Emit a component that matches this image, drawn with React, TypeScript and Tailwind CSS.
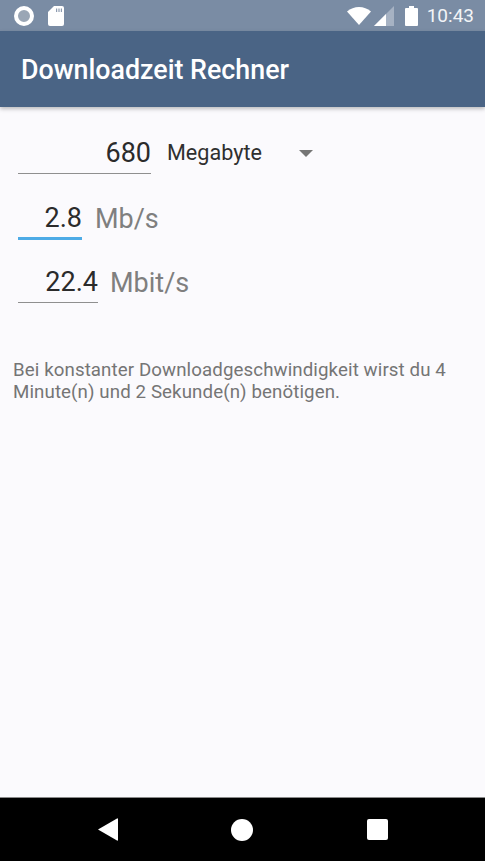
const ROBOTO = "font-['Roboto',sans-serif]";

const StatusBar = () => (
  <div className="h-[31px] shrink-0 bg-[#7a8ca4] flex items-center pl-[14px] pr-[11px] text-white">
    <div className="w-[20px] h-[20px] rounded-full border-[4px] border-white bg-[#9aa6b5]"></div>
    <svg className="ml-[14px]" width="16" height="20" viewBox="0 0 16 20">
      <path d="M6 0H14a2 2 0 0 1 2 2V18a2 2 0 0 1-2 2H2a2 2 0 0 1-2-2V6Z" fill="#fff" />
      <path d="M8 2.5h1.2v3.5H8zM10.4 2.5h1.2v3.5h-1.2zM12.8 2.5H14v3.5h-1.2z" fill="#8d9bb0" />
    </svg>
    <div className="flex-1"></div>
    <svg width="24" height="18" viewBox="0 0 24 18">
      <path d="M0 4.5C3.5 1.6 7.5 0 12 0s8.500 1.600 12 4.500L12 18Z" fill="#fff" />
    </svg>
    <svg className="ml-[3px]" width="20" height="20" viewBox="0 0 20 20">
      <path d="M0 20L20 0V20Z" fill="#a6b2c3" />
      <path d="M0 20L12 8V20Z" fill="#fff" />
    </svg>
    <svg className="ml-[11px]" width="13" height="20" viewBox="0 0 13 20">
      <path d="M4 0H9V2H12a1 1 0 0 1 1 1V19a1 1 0 0 1-1 1H1a1 1 0 0 1-1-1V3a1 1 0 0 1 1-1H4Z" fill="#fff" />
    </svg>
    <span className={`ml-[9px] text-[19px] leading-none text-[#f2f4f7] ${ROBOTO}`}>10:43</span>
  </div>
);

const Field = ({ value, unit, widthClass, lineClass, unitClass }: { value: string; unit: string; widthClass: string; lineClass: string; unitClass: string }) => (
  <div className="flex items-start">
    <div className={`${widthClass} ${lineClass} flex items-center justify-end pt-[2px] text-[27px] text-[#2b2b2b]`}>
      {value}
    </div>
    <span className={`${unitClass} h-[42px] flex items-center pt-[2px] text-[27px] text-[#7f7f7f]`}>{unit}</span>
  </div>
);

export default function App() {
  return (
    <div className={`h-[861px] w-[485px] flex flex-col overflow-hidden bg-[#fbfafd] ${ROBOTO}`}>
      <StatusBar />
      <header className="h-[76px] shrink-0 bg-[#4a6485] flex items-center pl-[21px] pt-[2px] shadow-[0_2px_4px_rgba(0,0,0,0.25)]">
        <h1 className="text-[26.8px] font-medium text-white">Downloadzeit Rechner</h1>
      </header>

      <main className="flex-1 pl-[18px] pt-[25px]">
        <div className="flex items-start">
          <div className="w-[133px] h-[42px] border-b border-b-[#8f8f8f] flex items-center justify-end pt-[2px] text-[27px] text-[#2b2b2b]">
            680
          </div>
          <div className="ml-[16px] h-[42px] w-[146px] pt-[1px] flex items-center justify-between">
            <span className="text-[21.6px] text-[#2f2f2f]">Megabyte</span>
            <svg width="14" height="7" viewBox="0 0 14 7">
              <path d="M0 0H14L7 7Z" fill="#757575" />
            </svg>
          </div>
        </div>
        <div className="mt-[23px]">
          <Field value="2.8" unit="Mb/s" widthClass="w-[64px] h-[43px]" lineClass="border-b-[3px] border-b-[#4dabe6]" unitClass="ml-[13px]" />
        </div>
        <div className="mt-[21px]">
          <Field value="22.4" unit="Mbit/s" widthClass="w-[80px] h-[42px]" lineClass="border-b border-b-[#8f8f8f]" unitClass="ml-[12px]" />
        </div>
        <p className="-ml-[5px] mt-[56px] w-[450px] text-[18.7px] leading-[22px] tracking-[0.1px] text-[#757575]">
          Bei konstanter Downloadgeschwindigkeit wirst du 4 Minute(n) und 2 Sekunde(n) benötigen.
        </p>
      </main>

      <nav className="h-[64px] shrink-0 bg-black border-t border-t-[#8a8a8a] flex items-center">
        <svg className="ml-[98px]" width="20" height="23" viewBox="0 0 20 23">
          <path d="M0 11.500L19 0.500a0.700 0.700 0 0 1 1 0.500V22a0.700 0.700 0 0 1-1 0.500Z" fill="#fff" />
        </svg>
        <div className="ml-[113px] w-[22px] h-[22px] rounded-full bg-white"></div>
        <div className="ml-[114px] w-[21px] h-[21px] rounded-[2px] bg-white"></div>
      </nav>
    </div>
  );
}
